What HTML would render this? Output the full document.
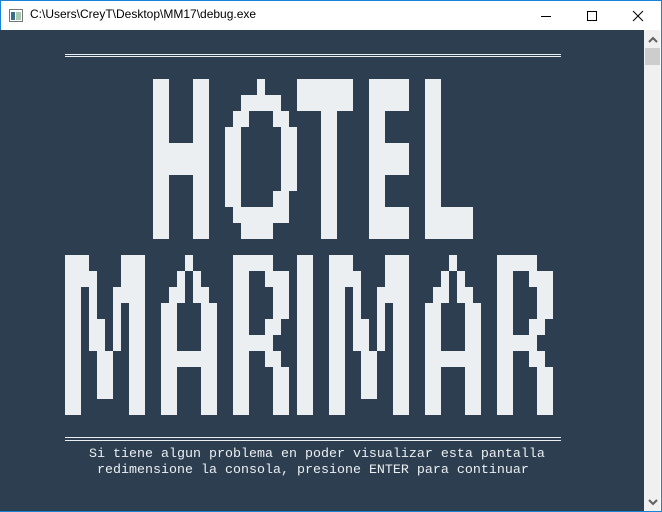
<!DOCTYPE html>
<html><head><meta charset="utf-8"><style>
html,body{margin:0;padding:0;width:662px;height:512px;overflow:hidden;background:#fff}
.win{position:absolute;left:0;top:0;width:660px;height:510px;border:1px solid #1883d7;background:#fff}
.title{position:absolute;left:30px;top:7px;font:12px "Liberation Sans",sans-serif;color:#000}
.con{position:absolute;left:0;top:30px;width:644px;height:481px;background:#2c3e50}
.sb{position:absolute;left:644px;top:30px;width:16px;height:481px;background:#f0f0f0}
.thumb{position:absolute;left:645px;top:48px;width:15px;height:17px;background:#cdcdcd}
.txt{position:absolute;font:13.33px "Liberation Mono",monospace;color:#eceff1;white-space:pre;line-height:16px}
</style></head><body>
<div class="win"></div>
<svg style="position:absolute;left:9px;top:9px" width="14" height="13"><rect x="0.5" y="0.5" width="13" height="12" fill="#fff" stroke="#777"/><rect x="2" y="3" width="4" height="8" fill="#3a6c8c"/><rect x="7" y="3" width="5" height="8" fill="#a8c8b0"/></svg>
<div class="title">C:\Users\CreyT\Desktop\MM17\debug.exe</div>
<svg style="position:absolute;left:530px;top:8px" width="125" height="16">
<line x1="11" y1="8.5" x2="21" y2="8.5" stroke="#000"/>
<rect x="57.5" y="3.5" width="9" height="9" fill="none" stroke="#000"/>
<path d="M103 3 L113 13 M113 3 L103 13" stroke="#000"/>
</svg>
<div class="con"></div>
<div class="sb"></div><div class="thumb"></div>
<svg style="position:absolute;left:645px;top:30px" width="16" height="481">
<path d="M4 12 L8 8 L12 12" stroke="#606060" stroke-width="2" fill="none"/>
<path d="M4 470 L8 474 L12 470" stroke="#606060" stroke-width="2" fill="none"/>
</svg>
<svg style="position:absolute;left:0;top:0" width="644" height="512" fill="#eceff1">
<rect x="65" y="54" width="496" height="1"/><rect x="65" y="56" width="496" height="1"/>
<rect x="65" y="437" width="496" height="1"/><rect x="65" y="440" width="496" height="1"/>
<!-- H -->
<rect x="153" y="79" width="16" height="160"/><rect x="193" y="79" width="16" height="160"/><rect x="169" y="143" width="24" height="32"/>
<!-- O -->
<rect x="257" y="79" width="8" height="16"/><rect x="241" y="95" width="40" height="16"/>
<rect x="233" y="111" width="16" height="16"/><rect x="273" y="111" width="16" height="16"/>
<rect x="225" y="127" width="16" height="64"/><rect x="281" y="127" width="16" height="64"/>
<rect x="225" y="191" width="16" height="16"/><rect x="273" y="191" width="16" height="16"/>
<rect x="233" y="207" width="56" height="16"/><rect x="241" y="223" width="32" height="16"/>
<!-- T -->
<rect x="297" y="79" width="56" height="32"/><rect x="321" y="111" width="16" height="128"/>
<!-- E -->
<rect x="369" y="79" width="40" height="32"/><rect x="369" y="79" width="16" height="160"/><rect x="369" y="143" width="40" height="32"/><rect x="369" y="207" width="40" height="32"/>
<!-- L -->
<rect x="425" y="79" width="16" height="160"/><rect x="425" y="207" width="48" height="32"/>
<!-- M1 -->
<g transform="translate(65,0)">
<rect x="0" y="255" width="16" height="160"/><rect x="64" y="255" width="16" height="160"/>
<rect x="16" y="255" width="8" height="16"/><rect x="56" y="255" width="8" height="48"/>
<rect x="16" y="271" width="16" height="16"/>
<rect x="24" y="287" width="8" height="32"/><rect x="48" y="287" width="8" height="64"/>
<rect x="24" y="319" width="16" height="32"/><rect x="32" y="351" width="16" height="48"/>
</g>
<!-- A1 -->
<g transform="translate(161,0)">
<rect x="24" y="255" width="8" height="16"/><rect x="16" y="271" width="8" height="16"/><rect x="32" y="271" width="8" height="16"/>
<rect x="8" y="287" width="16" height="16"/><rect x="32" y="287" width="16" height="16"/>
<rect x="0" y="303" width="16" height="112"/><rect x="40" y="303" width="16" height="112"/><rect x="0" y="351" width="56" height="16"/>
</g>
<!-- R1 -->
<g transform="translate(233,0)">
<rect x="0" y="255" width="16" height="160"/><rect x="0" y="255" width="40" height="16"/>
<rect x="32" y="271" width="24" height="16"/><rect x="40" y="287" width="16" height="32"/>
<rect x="32" y="319" width="16" height="16"/><rect x="0" y="335" width="40" height="16"/>
<rect x="32" y="351" width="16" height="16"/><rect x="40" y="367" width="16" height="48"/>
</g>
<!-- I -->
<rect x="297" y="255" width="16" height="160"/>
<!-- M2 -->
<g transform="translate(329,0)">
<rect x="0" y="255" width="16" height="160"/><rect x="64" y="255" width="16" height="160"/>
<rect x="16" y="255" width="8" height="16"/><rect x="56" y="255" width="8" height="48"/>
<rect x="16" y="271" width="16" height="16"/>
<rect x="24" y="287" width="8" height="32"/><rect x="48" y="287" width="8" height="64"/>
<rect x="24" y="319" width="16" height="32"/><rect x="32" y="351" width="16" height="48"/>
</g>
<!-- A2 -->
<g transform="translate(425,0)">
<rect x="24" y="255" width="8" height="16"/><rect x="16" y="271" width="8" height="16"/><rect x="32" y="271" width="8" height="16"/>
<rect x="8" y="287" width="16" height="16"/><rect x="32" y="287" width="16" height="16"/>
<rect x="0" y="303" width="16" height="112"/><rect x="40" y="303" width="16" height="112"/><rect x="0" y="351" width="56" height="16"/>
</g>
<!-- R2 -->
<g transform="translate(497,0)">
<rect x="0" y="255" width="16" height="160"/><rect x="0" y="255" width="40" height="16"/>
<rect x="32" y="271" width="24" height="16"/><rect x="40" y="287" width="16" height="32"/>
<rect x="32" y="319" width="16" height="16"/><rect x="0" y="335" width="40" height="16"/>
<rect x="32" y="351" width="16" height="16"/><rect x="40" y="367" width="16" height="48"/>
</g>
</svg>
<div class="txt" style="left:89px;top:447px">Si tiene algun problema en poder visualizar esta pantalla</div>
<div class="txt" style="left:97px;top:463px">redimensione la consola, presione ENTER para continuar</div>
</body></html>
